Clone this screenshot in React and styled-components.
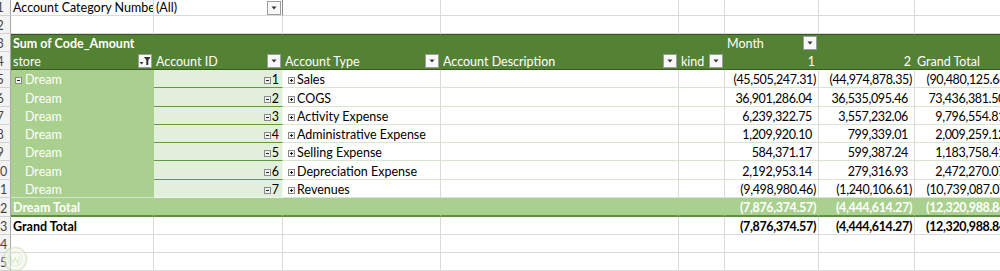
import React from 'react';
import styled, { createGlobalStyle } from 'styled-components';

const WIDTHS = [11, 143, 129, 158, 238, 46, 94, 96, 97];
const HEIGHTS = [16, 18, 18, 18, 18, 19, 18, 18, 18, 19, 18, 19, 18, 18, 18];

const GRID = '#dadada';
const HEAD = '#548235';
const HEAD_DARK = '#375623';
const LIGHT = '#a9d08e';
const PALE = '#e2efda';

const GlobalStyle = createGlobalStyle`
  html, body { margin: 0; padding: 0; background: #fff; overflow: hidden; }
  body { font-family: Lato, 'Open Sans', 'Liberation Sans', sans-serif; font-size: 12.5px; line-height: 15px; color: #000; }
`;

const Sheet = styled.div`
  position: relative;
  width: ${WIDTHS.reduce((a, b) => a + b, 0)}px;
`;

const Row = styled.div`
  display: grid;
  grid-template-columns: ${WIDTHS.map((w) => `${w}px`).join(' ')};
  height: ${(p) => p.$h}px;
`;

const Cell = styled.div`
  box-sizing: border-box;
  min-width: 0;
  display: flex;
  align-items: flex-end;
  justify-content: ${(p) => (p.$right ? 'flex-end' : 'flex-start')};
  padding: 0 ${(p) => p.$pr ?? 2}px 0 ${(p) => p.$pl ?? 2}px;
  white-space: nowrap;
  overflow: hidden;
  background: #fff;
  color: #000;
  border-right: 1px solid ${GRID};
  border-bottom: 1px solid ${GRID};
  font-weight: ${(p) => (p.$bold ? 700 : 400)};
  letter-spacing: ${(p) => (p.$num ? '-0.35px' : 'normal')};
`;

const FilterCell = styled(Cell)`
  justify-content: space-between;
  padding-right: 1px;
  border-right-color: #8f8f8f;
`;

const RowHead = styled(Cell)`
  padding: 0;
  background: #f3f3f3;
  color: #444;
  border-right-color: #a8a8a8;
  border-bottom-color: #d2d2d2;
`;

const RowNum = styled.span`
  flex: none;
  width: 22px;
  margin-left: -11px;
  text-align: center;
`;

const HeadCell = styled(Cell)`
  background: ${HEAD};
  color: #fff;
  border-right-color: ${HEAD};
  border-top: ${(p) => (p.$top ? `1px solid ${HEAD_DARK}` : 'none')};
  border-bottom-color: ${(p) => (p.$bottom ? HEAD_DARK : HEAD)};
  justify-content: ${(p) => (p.$right ? 'flex-end' : 'space-between')};
  padding-right: ${(p) => p.$pr ?? 1}px;
`;

const StoreCell = styled(Cell)`
  background: ${LIGHT};
  color: #fff;
  border-right-color: ${LIGHT};
  border-bottom-color: ${(p) => (p.$last ? '#d3e7c5' : LIGHT)};
  padding-left: ${(p) => p.$pl ?? 14}px;
`;

const IdCell = styled(Cell)`
  justify-content: flex-end;
  background: ${PALE};
  border-right-color: #f4f9f0;
  border-bottom-color: ${(p) => (p.$last ? '#f0f6ec' : '#5f9a3e')};
  padding-right: 3px;
`;

const DataCell = styled(Cell)`
  border-bottom-color: #d9e6cf;
  padding-left: ${(p) => p.$pl ?? 2}px;
`;

const TotalCell = styled(Cell)`
  background: ${LIGHT};
  color: #fff;
  font-weight: 700;
  border-right-color: ${LIGHT};
  border-bottom: 2px solid #5f8f40;
`;

const Label = styled.span`
  overflow: hidden;
`;

const DropBtn = styled.span`
  flex: none;
  align-self: center;
  box-sizing: border-box;
  width: 14px;
  height: 14px;
  border: 1px solid #9c9c9c;
  background: #f8f8f8;
  display: flex;
  align-items: center;
  justify-content: center;
`;

const BoxSvg = styled.svg`
  flex: none;
  margin-right: ${(p) => p.$mr ?? 2}px;
  margin-bottom: 3px;
`;

const Watermark = styled.svg`
  position: absolute;
  left: 2px;
  top: 246px;
  opacity: 0.55;
`;

const Arrow = () => (
  <svg width="6" height="4" viewBox="0 0 6 4">
    <path d="M0.5 0.5h5L3 3.5z" fill="#333" />
  </svg>
);

const Dropdown = () => (
  <DropBtn>
    <Arrow />
  </DropBtn>
);

const FilterBtn = () => (
  <DropBtn>
    <svg width="12" height="10" viewBox="0 0 12 10">
      <path d="M0.5 6h4L2.5 8.5z" fill="#333" />
      <path d="M5 1h6.5L9.3 4.2V9H7.3V4.2z" fill="#333" />
    </svg>
  </DropBtn>
);

const Toggle = ({ minus, mr }) => (
  <BoxSvg width="7" height="7" viewBox="0 0 7 7" $mr={mr}>
    <rect x="0.5" y="0.5" width="6" height="6" fill="#f2f2f2" stroke="#8a8a8a" />
    <rect x="2" y="3" width="3" height="1" fill="#222" />
    {!minus && <rect x="3" y="2" width="1" height="3" fill="#222" />}
  </BoxSvg>
);

const Num = ({ as: Comp = DataCell, value, ...rest }) => (
  <Comp $right $num $pr={value.startsWith('(') ? 2 : 6} {...rest}>
    {value}
  </Comp>
);

const DATA = [
  { id: 1, type: 'Sales', v: ['(45,505,247.31)', '(44,974,878.35)', '(90,480,125.66)'] },
  { id: 2, type: 'COGS', v: ['36,901,286.04', '36,535,095.46', '73,436,381.50'] },
  { id: 3, type: 'Activity Expense', v: ['6,239,322.75', '3,557,232.06', '9,796,554.81'] },
  { id: 4, type: 'Administrative Expense', v: ['1,209,920.10', '799,339.01', '2,009,259.12'] },
  { id: 5, type: 'Selling Expense', v: ['584,371.17', '599,387.24', '1,183,758.41'] },
  { id: 6, type: 'Depreciation Expense', v: ['2,192,953.14', '279,316.93', '2,472,270.07'] },
  { id: 7, type: 'Revenues', v: ['(9,498,980.46)', '(1,240,106.61)', '(10,739,087.07)'] },
];

const TOTALS = ['(7,876,374.57)', '(4,444,614.27)', '(12,320,988.84)'];

const Head = ({ n }) => (
  <RowHead>
    <RowNum>{n}</RowNum>
  </RowHead>
);

const Empty = ({ n }) => (
  <>
    {Array.from({ length: n }).map((_, i) => (
      <Cell key={i} />
    ))}
  </>
);

export default function App() {
  return (
    <>
      <GlobalStyle />
      <Sheet>
        <Row $h={HEIGHTS[0]}>
          <Head n={1} />
          <Cell>Account Category Number</Cell>
          <FilterCell>
            <Label>(All)</Label>
            <Dropdown />
          </FilterCell>
          <Empty n={6} />
        </Row>
        <Row $h={HEIGHTS[1]}>
          <Head n={2} />
          <Empty n={8} />
        </Row>
        <Row $h={HEIGHTS[2]}>
          <Head n={3} />
          <HeadCell $top $bold>Sum of Code_Amount</HeadCell>
          <HeadCell $top />
          <HeadCell $top />
          <HeadCell $top />
          <HeadCell $top />
          <HeadCell $top>
            <Label>Month</Label>
            <Dropdown />
          </HeadCell>
          <HeadCell $top />
          <HeadCell $top />
        </Row>
        <Row $h={HEIGHTS[3]}>
          <Head n={4} />
          <HeadCell $bottom>
            <Label>store</Label>
            <FilterBtn />
          </HeadCell>
          <HeadCell $bottom>
            <Label>Account ID</Label>
            <Dropdown />
          </HeadCell>
          <HeadCell $bottom>
            <Label>Account Type</Label>
            <Dropdown />
          </HeadCell>
          <HeadCell $bottom>
            <Label>Account Description</Label>
            <Dropdown />
          </HeadCell>
          <HeadCell $bottom>
            <Label>kind</Label>
            <Dropdown />
          </HeadCell>
          <HeadCell $bottom $right $pr={3}>1</HeadCell>
          <HeadCell $bottom $right $pr={3}>2</HeadCell>
          <HeadCell $bottom>Grand Total</HeadCell>
        </Row>
        {DATA.map((d, i) => {
          const last = i === DATA.length - 1;
          return (
            <Row key={d.id} $h={HEIGHTS[4 + i]}>
              <Head n={5 + i} />
              {i === 0 ? (
                <StoreCell $pl={4}>
                  <Toggle minus mr={3} />
                  Dream
                </StoreCell>
              ) : (
                <StoreCell $last={last}>Dream</StoreCell>
              )}
              <IdCell $last={last}>
                <Toggle minus mr={1} />
                {d.id}
              </IdCell>
              <DataCell $pl={5}>
                <Toggle mr={2} />
                {d.type}
              </DataCell>
              <DataCell />
              <DataCell />
              {d.v.map((v, k) => (
                <Num key={k} value={v} />
              ))}
            </Row>
          );
        })}
        <Row $h={HEIGHTS[11]}>
          <Head n={12} />
          <TotalCell>Dream Total</TotalCell>
          <TotalCell />
          <TotalCell />
          <TotalCell />
          <TotalCell />
          {TOTALS.map((v, k) => (
            <Num key={k} as={TotalCell} value={v} />
          ))}
        </Row>
        <Row $h={HEIGHTS[12]}>
          <Head n={13} />
          <Cell $bold>Grand Total</Cell>
          <Empty n={4} />
          {TOTALS.map((v, k) => (
            <Num key={k} as={Cell} $bold value={v} />
          ))}
        </Row>
        <Row $h={HEIGHTS[13]}>
          <Head n={14} />
          <Empty n={8} />
        </Row>
        <Row $h={HEIGHTS[14]}>
          <Head n={15} />
          <Empty n={8} />
        </Row>
        <Watermark width="26" height="26" viewBox="0 0 26 26">
          <circle cx="13" cy="13" r="11.5" fill="#f3f8ee" stroke="#c9dfb8" strokeWidth="2" />
          <circle cx="13" cy="13" r="7" fill="none" stroke="#d6e8c8" strokeWidth="1.5" />
          <path d="M8 10l2.5 7 2.5-5 2.5 5 2.5-7" fill="none" stroke="#c3dbb0" strokeWidth="1.3" />
        </Watermark>
      </Sheet>
    </>
  );
}
